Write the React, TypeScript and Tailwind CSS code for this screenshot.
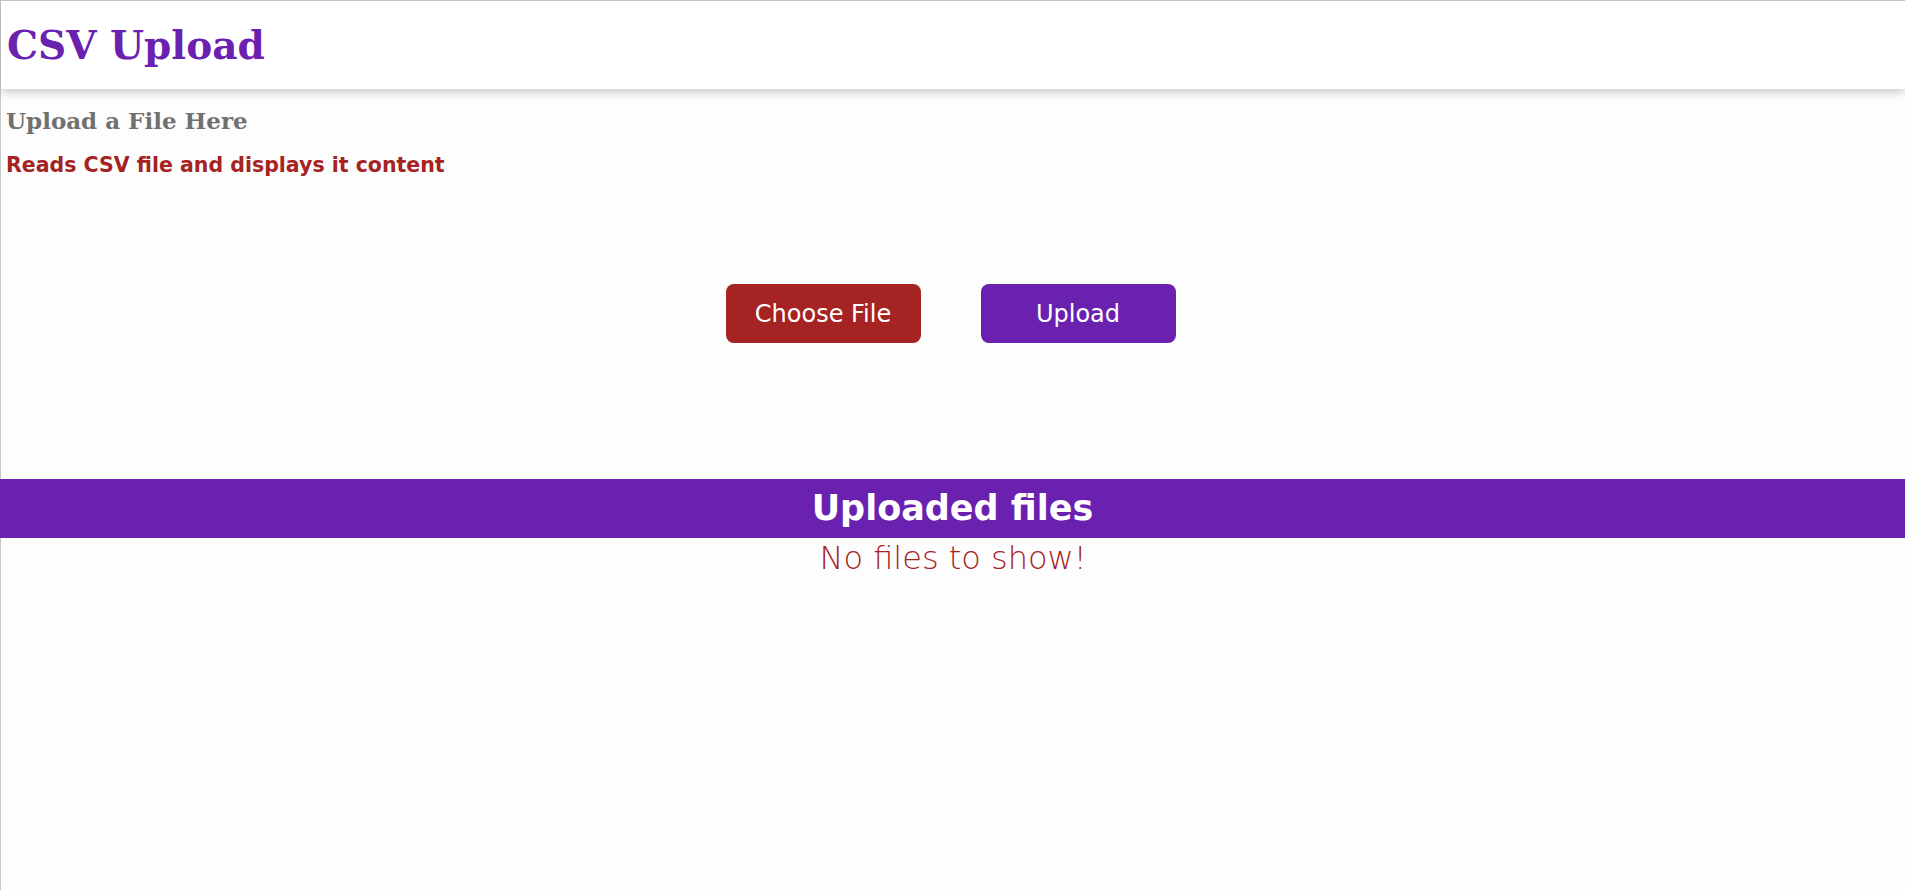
export default function App() {
  return (
    <div className="min-h-screen border-l border-t border-[#c8c8c8] bg-[#fdfdfd] font-['DejaVu_Sans',sans-serif]">
      {/* Header */}
      <header className="h-[88px] bg-white flex items-center px-[6px] shadow-[0_4px_8px_rgba(0,0,0,0.18)]">
        <h1 className="font-['DejaVu_Serif',serif] font-bold text-[39px] leading-none text-[#6a21b0]">CSV Upload</h1>
      </header>

      {/* Upload section */}
      <section className="h-[195px] px-[5px] pt-[18px]">
        <h2 className="font-['DejaVu_Serif',serif] font-bold text-[23px] leading-[28px] text-[#707070]">Upload a File Here</h2>
        <p className="mt-[17px] text-[20.5px] font-bold leading-[26px] text-[#a52323]">Reads CSV file and displays it content</p>
      </section>

      <div className="flex justify-center gap-[60px] pr-[5px] pb-[136px]">
        <button className="w-[195px] h-[59px] border-0 rounded-[8px] bg-[#a52323] text-white text-[24px]">Choose File</button>
        <button className="w-[195px] h-[59px] border-0 rounded-[8px] bg-[#6a21b0] text-white text-[24px]">Upload</button>
      </div>

      {/* Files list */}
      <div className="h-[59px] bg-[#6a21b0] flex items-center justify-center -ml-px">
        <h2 className="text-white font-bold text-[35px] leading-none">Uploaded files</h2>
      </div>
      <p className="text-center text-[#a52323] text-[32px] font-light leading-[40px]">No files to show!</p>
    </div>
  )
}
